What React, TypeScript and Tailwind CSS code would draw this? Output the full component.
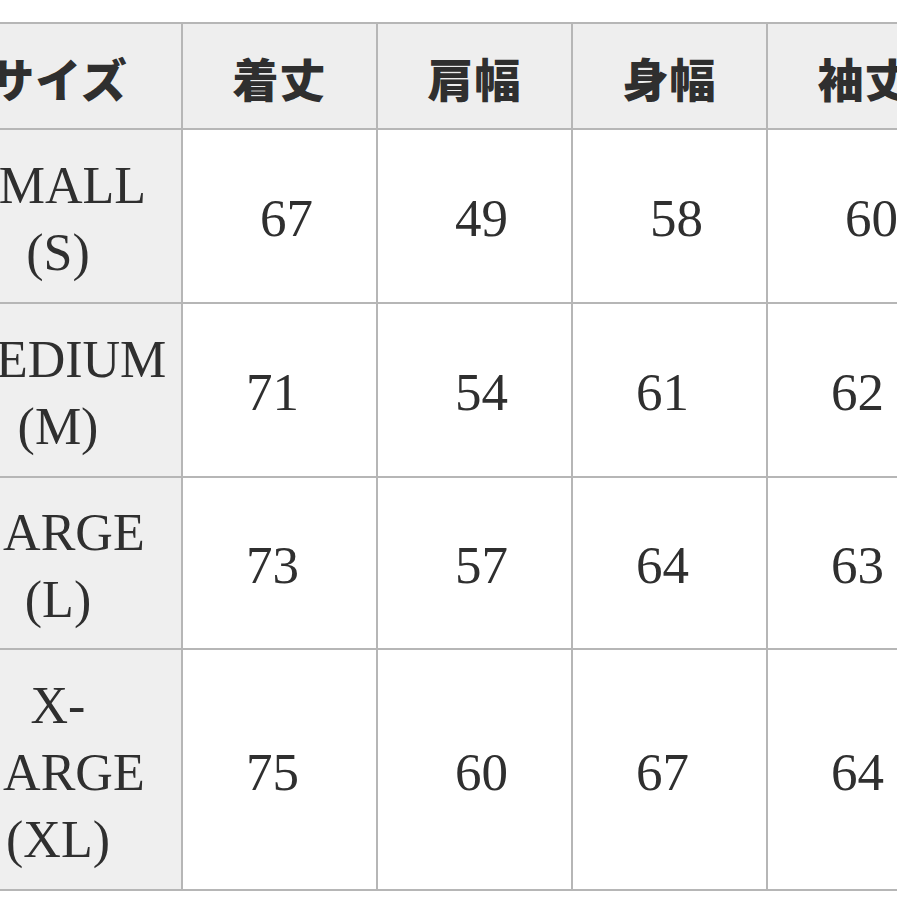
import React from "react";

const headers = ["サイズ", "着丈", "肩幅", "身幅", "袖丈"];

// shift: "r" pushes the number right, "l" pushes it left (as in the source table)
const rows: { label: string[]; values: string[]; shift: string[] }[] = [
  { label: ["SMALL", "(S)"], values: ["67", "49", "58", "60"], shift: ["r", "r", "r", "r"] },
  { label: ["MEDIUM", "(M)"], values: ["71", "54", "61", "62"], shift: ["l", "r", "l", "l"] },
  { label: ["LARGE", "(L)"], values: ["73", "57", "64", "63"], shift: ["l", "r", "l", "l"] },
  { label: ["X-", "LARGE", "(XL)"], values: ["75", "60", "67", "64"], shift: ["l", "r", "l", "l"] },
];

const serif = { fontFamily: '"Liberation Serif", "Times New Roman", serif' };

export default function App() {
  return (
    <div className="w-[897px] h-[897px] overflow-hidden bg-white">
      <div className="ml-[-67px] mt-[22px] w-max grid grid-cols-[246px_193px_193px_193px_193px] grid-rows-[104px_172px_172px_170px_239px] gap-[2px] p-[2px] bg-[#b6b6b6] text-[#2f2f2f]">
        {headers.map((h) => (
          <div
            key={h}
            className="bg-[#eeeeee] flex items-center justify-center pt-[2px] text-[46px] font-black tracking-[1px] font-['Noto_Sans_CJK_JP',sans-serif]"
          >
            {h}
          </div>
        ))}
        {rows.map((row) => (
          <React.Fragment key={row.label.join("")}>
            <div
              className="bg-[#efefef] flex flex-col items-center justify-center pt-[6px] text-[52px] leading-[67px]"
              style={serif}
            >
              {row.label.map((l) => (
                <span key={l}>{l}</span>
              ))}
            </div>
            {row.values.map((v, i) => (
              <div
                key={i}
                className={`bg-white flex items-center justify-center pt-[6px] text-[53px] ${
                  row.shift[i] === "r" ? "pl-[14px]" : "pr-[14px]"
                }`}
                style={serif}
              >
                {v}
              </div>
            ))}
          </React.Fragment>
        ))}
      </div>
    </div>
  );
}
